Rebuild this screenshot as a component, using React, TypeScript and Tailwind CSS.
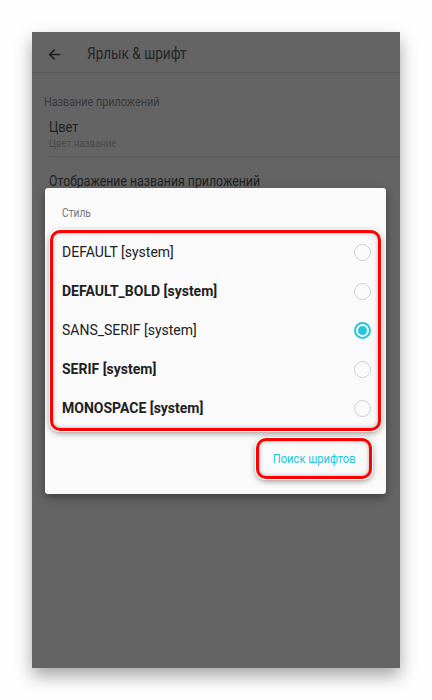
import React from "react";

type FontItem = { name: string; bold?: boolean; checked?: boolean };

const fonts: FontItem[] = [
  { name: "DEFAULT [system]" },
  { name: "DEFAULT_BOLD [system]", bold: true },
  { name: "SANS_SERIF [system]", checked: true },
  { name: "SERIF [system]", bold: true },
  { name: "MONOSPACE [system]", bold: true },
];

const Radio: React.FC<{ checked?: boolean }> = ({ checked }) =>
  checked ? (
    <span className="flex h-[17px] w-[17px] items-center justify-center rounded-full border-2 border-[#26c6da]">
      <span className="h-[9px] w-[9px] rounded-full bg-[#26c6da]" />
    </span>
  ) : (
    <span className="h-[17px] w-[17px] rounded-full border-[1.5px] border-[#cfcfcf]" />
  );

const App: React.FC = () => {
  return (
    <div className="h-[700px] w-[432px] bg-[#fefefe] pt-8 font-['Roboto',sans-serif]">
      <div className="relative mx-8 h-[636px] w-[368px] bg-[#646464] shadow-[0_8px_16px_rgba(0,0,0,0.35)]">
        {/* app bar (condensed android font) */}
        <div className="flex h-[41px] items-center border-b border-[#5b5b5b] pl-4 pt-[4px]">
          <svg width="13" height="13" viewBox="0 0 16 16" className="text-[#1e1e1e]">
            <path d="M15 8H2M8 2L2 8l6 6" fill="none" stroke="currentColor" strokeWidth="1.8" />
          </svg>
          <span className="ml-[26px] inline-block origin-left scale-x-[0.85] text-[16px] text-[#262626]">
            Ярлык &amp; шрифт
          </span>
        </div>

        {/* settings list behind dialog */}
        <div className="pt-[20px] pl-3">
          <div className="origin-left scale-x-[0.9] text-[12px] text-[#3a3a3a]">Название приложений</div>
          <div className="ml-[5px] mt-[6px] border-b border-[#5a5a5a] pb-[5px]">
            <div className="origin-left scale-x-[0.85] text-[15px] leading-[20px] text-[#222]">Цвет</div>
            <div className="origin-left scale-x-[0.92] text-[10.5px] leading-[14px] text-[#4a4a4a]">
              Цвет название
            </div>
          </div>
          <div className="ml-[5px] mt-[14px] origin-left scale-x-[0.82] whitespace-nowrap text-[15px] leading-[20px] text-[#222]">
            Отображение названия приложений
          </div>
        </div>

        {/* dialog */}
        <div className="absolute left-[13px] top-[156px] h-[306px] w-[341px] rounded-[3px] bg-[#fafafa] shadow-[0_3px_8px_rgba(0,0,0,0.4)]">
          <div className="pl-[17px] pt-[17px]">
            <div className="origin-left scale-x-[0.85] text-[12px] leading-[16px] text-[#767676]">Стиль</div>
          </div>
          <div className="mx-[5px] mt-[9px] rounded-[10px] border-[3px] border-[#ff0000] shadow-[0_0_0_1px_#fff,0_2px_6px_rgba(0,0,0,0.45),inset_0_0_4px_rgba(0,0,0,0.3)]">
            {fonts.map((f) => (
              <div key={f.name} className="flex h-[39px] items-center justify-between pl-[9px] pr-[7px]">
                <span className={"text-[14px] text-[#212121] " + (f.bold ? "font-bold" : "font-normal")}>
                  {f.name}
                </span>
                <Radio checked={f.checked} />
              </div>
            ))}
          </div>
          <div className="mt-[7px] flex justify-end pr-[14px]">
            <div className="flex h-[41px] w-[116px] items-center justify-center rounded-[10px] border-[3px] border-[#ff0000] shadow-[0_0_0_1px_#fff,0_2px_6px_rgba(0,0,0,0.45),inset_0_0_4px_rgba(0,0,0,0.3)]">
              <span className="inline-block scale-x-[0.86] whitespace-nowrap text-[13px] text-[#26c6da]">
                Поиск шрифтов
              </span>
            </div>
          </div>
        </div>
      </div>
    </div>
  );
};

export default App;
